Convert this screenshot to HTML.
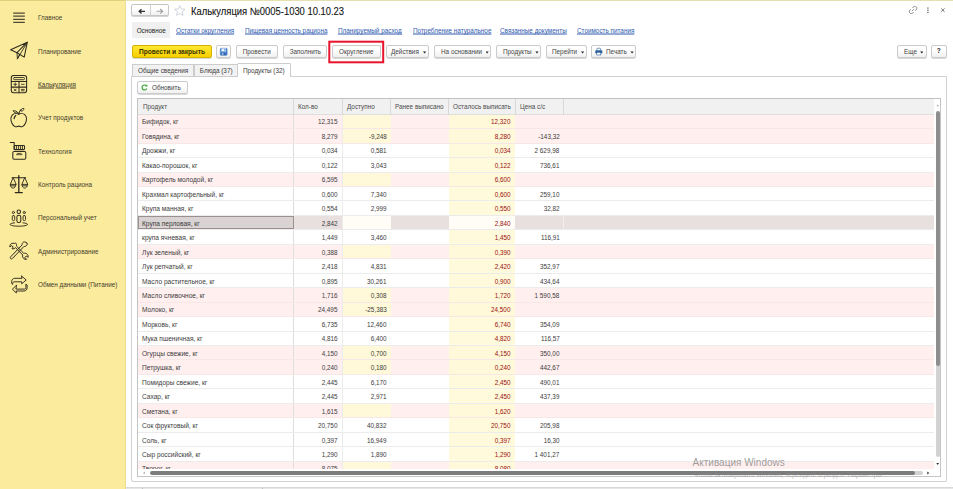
<!DOCTYPE html>
<html lang="ru"><head><meta charset="utf-8"><title>Калькуляция</title>
<style>
*{box-sizing:border-box;margin:0;padding:0}
html,body{width:953px;height:489px;overflow:hidden;background:#fff}
body{font-family:"Liberation Sans",sans-serif;font-size:7px;color:#3c3c3c;line-height:1}
#app{position:relative;width:953px;height:489px;overflow:hidden;background:#fff}
/* sidebar */
#side{position:absolute;left:0;top:0;width:125.6px;height:489px;background:#fbeb9c;border-right:1px solid #eadc92}
#side .edge{display:none}
#topstrip{position:absolute;left:0;top:0;width:953px;height:1.2px;background:#e6dfb0}
#topstrip i{position:absolute;left:0;top:0;width:125px;height:100%;background:#e0cf7a;display:block}
.mi{position:absolute;left:37.8px;white-space:nowrap;color:#45412f;transform:translateY(-50%) scaleX(.907);transform-origin:0 50%}
.mi.u{text-decoration:underline}
.ico{position:absolute;overflow:visible}
.ico *{fill:none;stroke:#2e2a1f;stroke-width:1.05;stroke-linecap:round;stroke-linejoin:round}
/* top */
.title{position:absolute;left:190.8px;top:11.1px;font-size:10.5px;color:#111;white-space:nowrap;-webkit-text-stroke:0.1px #111;transform:translateY(-50%) scaleX(.896);transform-origin:0 50%}
.navgrp{position:absolute;left:131.3px;top:4.4px;width:37.3px;height:12px;border:1px solid #c6c6c6;border-radius:2px;background:linear-gradient(#fff 40%,#f0f0f0);box-shadow:0 0.7px 0.6px rgba(0,0,0,.22)}
.navgrp i{position:absolute;left:17.8px;top:0;width:1px;height:100%;background:#d0d0d0}
.svgi{position:absolute;overflow:visible}
.lnk{position:absolute;top:30.3px;transform:translateY(-50%) scaleX(.907);transform-origin:0 50%;color:#2f5bb0;text-decoration:underline;white-space:nowrap}
.maintab{position:absolute;left:132px;top:22px;width:38.4px;height:15.8px;background:#f0f0f0}
.maintab span{position:absolute;left:0;width:100%;text-align:center;top:8.3px;transform:translateY(-50%) scaleX(.907);color:#222}
.btn{position:absolute;top:45.3px;height:12.9px;border:1px solid #cbcbcb;border-radius:2px;background:linear-gradient(#ffffff 35%,#f0f0f0);box-shadow:0 0.7px 0.6px rgba(0,0,0,.2);white-space:nowrap;color:#444}
.btn span{position:absolute;left:0;width:100%;text-align:center;top:calc(50% - 0.4px);transform:translateY(-50%) scaleX(.907)}
.btn span.l{text-align:left;width:auto;transform-origin:0 50%}
.btn.y{background:linear-gradient(#ffe733,#f6d000);border-color:#d4b400;color:#3a3300;font-weight:bold}
.btn.y span{transform:translateY(-50%) scaleX(.94)}
.dd{position:absolute;top:5.2px;width:3.2px;height:2.1px;background:#222;clip-path:polygon(0 0,100% 0,50% 100%)}
.redbox{position:absolute;left:0;top:0;overflow:visible}
.tab{position:absolute;top:64px;height:13px;border:1px solid #cdcdcd;background:#f2f2f2;color:#3c3c3c}
.tab span{position:absolute;left:0;width:100%;text-align:center;top:calc(50% - 0.3px);transform:translateY(-50%) scaleX(.907);white-space:nowrap}
.tab.act{top:63px;height:14px;background:#fff;border-bottom:none;z-index:2;border-radius:1.5px 1.5px 0 0}
.panel{position:absolute;left:131.3px;top:76px;width:815.8px;height:406px;border:1px solid #d0d0d0;border-radius:0 0 2px 2px}
/* grid */
.grid{position:absolute;left:137.2px;top:98.2px;width:804.2px;height:378.6px;border:1px solid #c4c4c4;border-top:1.3px solid #c0c0c0;background:#fff;overflow:hidden}
.ghead{position:absolute;left:0;top:0;width:796.2px;height:15.5px;background:#f1f1f1;border-bottom:1px solid #dedede}
.hc{position:absolute;top:0;height:15.5px;border-right:1px solid #d8d8d8;color:#4a4a4a}
.hc.last{border-right:none}
.hc span{position:absolute;left:4.4px;top:6.6px;transform:translateY(-50%) scaleX(.907);transform-origin:0 50%;white-space:nowrap}
.gbody{position:absolute;left:0;top:15.5px;width:796.2px;height:354.5px;overflow:hidden}
.row{position:absolute;left:0;width:796.2px;height:14.46px;border-bottom:1px solid #ececec;background:#fff}
.row.pink{background:#ffefef;border-bottom-color:#f8e7e7}
.row.sel{background:#e8dfdf}
.c{position:absolute;top:0;height:100%}
.c span{position:absolute;top:6.8px;transform:translateY(-50%) scaleX(.907);transform-origin:100% 50%;white-space:nowrap}
.c0{border-right:1px solid #dedede}
.c1{border-right:1px solid #ececec}
.c0 span{left:3.7px;transform-origin:0 50%;transform:translateY(-50%) scaleX(.94)}
.c1 span{right:4.9px}.c2 span{right:4.6px}.c3 span{right:4px}.c4 span{right:4.3px}.c5 span{right:4.3px}
.c4{background:#fffadb}
.row.pink .c2,.row.pink .c4{background:#fff9d9}
.c4 span{color:#9a0e0e}
.row.sel .c0{background:#d9d3d3;border:1px solid #9a9090}
.row.sel .c0 span{left:2.7px;top:5.8px}
.row.sel .c2,.row.sel .c4{background:#fffdf6}
.row.sel .c5{border-right:1px solid #f3eded}
/* scrollbars */
.vsb{position:absolute;left:796.2px;top:0;width:7px;height:377px;background:#fff}
.vsb .th{position:absolute;left:1.8px;top:11.6px;width:3.7px;height:255.5px;border-radius:2px;background:#8e8e8e}
.vsb .tr{position:absolute;left:1.8px;top:265px;width:3.7px;height:92.5px;border-radius:0 0 2px 2px;background:#d2d2d2}
.hsb{position:absolute;left:0;top:370.4px;width:797px;height:7px;background:#fff}
.hsb .th{position:absolute;left:11.5px;top:1.4px;width:765px;height:3.9px;border-radius:2px;background:#7c7c7c}
.hsb .tr{position:absolute;left:770px;top:1.4px;width:14.5px;height:3.9px;border-radius:2px;background:#d2d2d2}
.arr{position:absolute;width:0;height:0}
.wm1{position:absolute;left:692.6px;top:463.2px;transform:translateY(-50%);font-size:10px;color:rgba(120,120,120,.72);white-space:nowrap;z-index:5}
.wm2{position:absolute;left:694px;top:474.4px;transform:translateY(-50%) scaleX(.907);transform-origin:0 50%;font-size:7px;color:rgba(140,140,140,.6);white-space:nowrap;z-index:5}
.bot{position:absolute;left:126px;top:486.8px;width:827px;height:3px;background:#e6e6e6;border-top:1px solid #d8d8d8}
.bot i{position:absolute;top:0;width:1px;height:3px;background:#bdbdbd}

</style></head>
<body>
<div id="app">
<div id="side"><div class="edge"></div>
<div class="mi" style="top:17.4px">Главное</div>
<div class="mi" style="top:50.7px">Планирование</div>
<div class="mi u" style="top:83.9px">Калькуляция</div>
<div class="mi" style="top:117.4px">Учет продуктов</div>
<div class="mi" style="top:150.7px">Технология</div>
<div class="mi" style="top:184.1px">Контроль рациона</div>
<div class="mi" style="top:217.4px">Персональный учет</div>
<div class="mi" style="top:250.7px">Администрирование</div>
<div class="mi" style="top:284.1px">Обмен данными (Питание)</div>
<!-- icons -->
<svg class="ico" style="left:0;top:0" width="126" height="300" viewBox="0 0 126 300">
<!-- menu -->
<path d="M13.2 13.100H24.800M13.2 16.200H24.800M13.2 19.300H24.800M13.2 22.350H24.800" style="stroke:#4f4938;stroke-width:1.25;stroke-linecap:butt"/>
<!-- paper plane -->
<path d="M27.300 42.200L10.600 49.800L17 52.700L27.300 42.200L24.200 57.100L17 52.700"/>
<path d="M17 52.700L17.400 58.900L19.600 54.300M27.300 42.200L17.400 58.900" style="stroke-width:.9"/>
<!-- calculator -->
<rect x="11.300" y="75.500" width="15.300" height="17.300" rx="2.200"/>
<rect x="13.600" y="77.500" width="10.800" height="2.200" rx=".8" style="stroke-width:.9"/>
<path d="M11.300 81.500H26.600M11.300 87.100H26.600M19 81.500V92.800"/>
<path d="M13.800 84.300H16.600M15.200 82.900V85.700M21.400 84.300H24.200M14.200 89L16.200 91M16.200 89L14.200 91M21.400 89.400H24.200M21.400 90.800H24.200" style="stroke-width:.85"/>
<!-- apple -->
<path d="M18.700 114.400c-1.600-1.300-4.300-1.300-6 .3c-2.200 2.100-2.100 5.800-.6 8.800c1.400 2.800 3.600 3.900 5.200 3c.9-.5 1.900-.5 2.800 0c1.600.9 3.800-.2 5.200-3c1.500-3 1.600-6.700-.6-8.800c-1.700-1.600-4.400-1.600-6-.3z"/>
<path d="M18.800 114.200c.2-1.800.9-3.300 2.200-4.500"/>
<path d="M21 110c.4-1.200 1.600-1.900 2.900-1.500c.1 1.300-.9 2.600-2.400 2.600zM18.300 113.100c-1.300-1.900-3.300-2.700-5.300-2.300c1 1.600 2.900 2.500 5.300 2.300z" style="stroke-width:.9"/>
<path d="M14.100 118.600c.1-1.300.7-2.400 1.700-3.100" style="stroke-width:1.200"/>
<!-- fryer -->
<path d="M10.200 142.400H14.200V149.600"/>
<rect x="14.200" y="145.500" width="10.300" height="4.100" rx=".8"/>
<path d="M16.400 145.500V149.600M18.400 145.500V149.600M20.400 145.500V149.600M22.400 145.500V149.600" style="stroke-width:.9"/>
<rect x="12.800" y="151.400" width="13" height="7.900" rx="1.300"/>
<path d="M16.600 154.300c.3-.7.700-.9 1.300-.9h2.700c.6 0 1 .2 1.300.9z" style="stroke-width:.8"/>
<!-- scales -->
<path d="M18.800 175.600V192.600M15.300 192.600H22.300" style="stroke-width:1.300"/>
<path d="M12 177.700H25.600"/>
<path d="M13 177.900L10.300 184.400H15.800zM24.600 177.900L21.900 184.400H27.400z" style="stroke-width:.9"/>
<path d="M10.300 184.400c0 2.200 1.200 3.700 2.750 3.700s2.750-1.500 2.750-3.700M21.900 184.400c0 2.200 1.200 3.700 2.750 3.700s2.750-1.500 2.750-3.700M10.800 185.800H15.300M22.400 185.800H26.900" style="stroke-width:.9"/>
<!-- people -->
<circle cx="18.800" cy="211.800" r="1.750"/>
<rect x="16.900" y="215.200" width="3.900" height="7.200" rx="1.700"/>
<circle cx="13.400" cy="212.500" r="1.100" style="stroke-width:.9"/>
<rect x="12.300" y="215.600" width="2.400" height="5" rx="1" style="stroke-width:.9"/>
<circle cx="24.300" cy="212.500" r="1.100" style="stroke-width:.9"/>
<rect x="23.100" y="215.600" width="2.400" height="5" rx="1" style="stroke-width:.9"/>
<path d="M14.600 222.800c-2.700.3-4.500.9-4.500 1.600c0 1 3.900 1.800 8.700 1.800s8.700-.8 8.700-1.800c0-.7-1.800-1.300-4.500-1.600" style="stroke-width:.95"/>
<!-- tools -->
<path d="M13.900 243.300c-1.300-.3-2.600.1-3.400 1.100c-.6.800-.8 1.700-.6 2.600l1.800-1.500l1.500 1.500l-1.200 1.700c1.300.4 2.700 0 3.500-1.100l7.200 7.400c-.4 1.300 0 2.700 1 3.600c.8.700 1.900.9 2.900.7l-1.700-1.700l1.400-1.600l1.800 1.300c.3-1.200-.1-2.500-1.100-3.400c-.9-.7-2.100-.9-3.200-.5l-7.300-7.300c.3-1 0-2.100-.6-2.800z" style="stroke-width:1"/>
<path d="M26.900 243.100c.6.500.5 1.600-.3 2.400c-.7.800-1.700 1.100-2.500.8L12.300 258.600c-.5.500-1.300.5-1.700 0c-.5-.4-.5-1.200 0-1.700l11.600-12.100c-.3-.7 0-1.500.7-2.200c.9-.9 2.300-1.200 4 .5z" style="stroke-width:1"/>
<!-- exchange -->
<path d="M21.700 276.100L26.200 280L21.700 283.800V281.800H14.300c-.9 0-1.600.7-1.600 1.600v1l-1-.9v-2.100c0-1.700 1.400-3.100 3.100-3.100h6.900z" style="stroke-width:.95"/>
<path d="M16.300 285.400L12.400 289.200L16.300 293V291h7.700c1.700 0 3.100-1.400 3.100-3.100V285l-1.200-.8v3.300c0 .9-.7 1.600-1.600 1.600H16.300z" style="stroke-width:.95"/>
</svg>
</div>
<div id="topstrip"><i></i></div>
<div class="navgrp"><i></i>
<svg class="svgi" style="left:5.6px;top:2.2px" width="8" height="7" viewBox="0 0 8 7"><path d="M7 3.3H1.400M3.500 1.200L1.200 3.300L3.500 5.400" fill="none" stroke="#333" stroke-width="1.350"/></svg>
<svg class="svgi" style="left:23.3px;top:2.2px" width="8" height="7" viewBox="0 0 8 7"><path d="M0.6 3.3H6.4M4.2 1L6.6 3.3L4.2 5.6" fill="none" stroke="#a0a0a0" stroke-width="1.1"/></svg>
</div>
<svg class="svgi" style="left:173.8px;top:5.3px" width="11.6" height="10.8" viewBox="0 0 24 22.6"><path d="M12 1.2l3.2 7 7.6.8-5.7 5.1 1.6 7.5L12 17.800 5.300 21.600l1.600-7.500L1.200 9l7.600-.8z" fill="#fff" stroke="#c3cad6" stroke-width="1.7" stroke-linejoin="round"/></svg>
<div class="title">Калькуляция №0005-1030 10.10.23</div>
<div class="maintab"><span>Основное</span></div>
<div class="lnk" style="left:176px">Остатки округления</div>
<div class="lnk" style="left:245px">Пищевая ценность рациона</div>
<div class="lnk" style="left:337.5px">Планируемый расход</div>
<div class="lnk" style="left:413.2px">Потребление натуральное</div>
<div class="lnk" style="left:499.7px">Связанные документы</div>
<div class="lnk" style="left:577px">Стоимость питания</div>
<!-- top-right icons -->
<svg class="svgi" style="left:0;top:0" width="953" height="20" viewBox="0 0 953 20">
<g fill="none" stroke="#8c8c8c" stroke-width="0.95" stroke-linecap="round"><path d="M910.470 9.510A2.200 2.200 0 1 0 913.390 12.430"/><path d="M915.630 10.490A2.200 2.200 0 1 0 912.710 7.570"/><path d="M912.200 10.800L913.900 9.200" stroke-dasharray="0.700 0.900"/></g>
<g fill="#4e4e4e"><rect x="927.300" y="7.500" width="1.200" height="1.200"/><rect x="927.300" y="9.700" width="1.200" height="1.200"/><rect x="927.300" y="11.900" width="1.200" height="1.200"/></g>
<path d="M941.200 8.500L944.600 11.900M944.600 8.500L941.200 11.900" stroke="#606060" stroke-width="0.850" fill="none"/>
</svg>
<!-- command bar -->
<div class="btn y" style="left:132px;width:80px"><span>Провести и закрыть</span></div>
<div class="btn" style="left:216.4px;width:14.2px">
<svg class="svgi" style="left:2.7px;top:1.7px" width="7.4" height="7.6" viewBox="0 0 15 15.400"><rect x="0.5" y="0.5" width="14" height="14.400" rx="1.5" fill="#4a88d4" stroke="#3a6fb8"/><rect x="3" y="0.8" width="9" height="6.2" fill="#e8f1fb"/><rect x="8.800" y="1.600" width="2" height="4" fill="#4a88d4"/><rect x="2.600" y="9.600" width="9.800" height="4.800" fill="#3568ae"/><rect x="4" y="10.800" width="3" height="2.600" fill="#dfe9f6"/></svg>
</div>
<div class="btn" style="left:236px;width:41.5px"><span>Провести</span></div>
<div class="btn" style="left:282.5px;width:44.7px"><span>Заполнить</span></div>
<div class="btn" style="left:332px;width:48.6px"><span>Округление</span></div>
<div class="btn" style="left:386px;width:42.9px"><span class="l" style="left:4.400px">Действия</span><i class="dd" style="left:36px"></i></div>
<div class="btn" style="left:434px;width:57.4px"><span class="l" style="left:5.600px">На основании</span><i class="dd" style="left:50.500px"></i></div>
<div class="btn" style="left:496.4px;width:44.9px"><span class="l" style="left:5.200px">Продукты</span><i class="dd" style="left:38px"></i></div>
<div class="btn" style="left:546px;width:40.9px"><span class="l" style="left:5.400px">Перейти</span><i class="dd" style="left:34px"></i></div>
<div class="btn" style="left:591.3px;width:45.2px">
<svg class="svgi" style="left:3.2px;top:1.9px" width="7.6" height="7.4" viewBox="0 0 15.200 14.800"><path d="M4 4.500V1.200c0-.4.300-.7.700-.7h5.800c.4 0 .7.300.7.700v3.300" fill="#fff" stroke="#2a5d9a" stroke-width="1.3"/><rect x="0.600" y="4.500" width="14" height="6.400" rx="1.600" fill="#2a5d9a"/><rect x="3.600" y="8.600" width="8" height="5.400" fill="#fff" stroke="#2a5d9a" stroke-width="1.2"/></svg>
<span class="l" style="left:14px">Печать</span><i class="dd" style="left:38.200px"></i></div>
<div class="btn" style="left:896.6px;width:30.2px"><span class="l" style="left:6.500px">Еще</span><i class="dd" style="left:22.600px"></i></div>
<div class="btn" style="left:931.3px;width:15.4px"><span style="font-weight:bold;font-size:7.2px;color:#222">?</span></div>
<svg class="redbox" width="953" height="70" viewBox="0 0 953 70"><rect x="329.300" y="41.700" width="53.900" height="20.600" fill="none" stroke="#e8132c" stroke-width="2"/></svg>
<div class="panel"></div>
<div class="tab" style="left:132px;width:62.3px"><span>Общие сведения</span></div>
<div class="tab" style="left:193.6px;width:44.4px"><span>Блюда (37)</span></div>
<div class="tab act" style="left:237.3px;width:53.6px"><span>Продукты (32)</span></div>
<div class="btn" style="left:137px;top:81.4px;width:51px;height:13px">
<svg class="svgi" style="left:2.900px;top:1.800px" width="7" height="7" viewBox="0 0 14 14"><path d="M11.6 9.200A5 5 0 1 1 11.200 4" fill="none" stroke="#35a831" stroke-width="2.300"/><path d="M8.200 4.800L12.800 5.200L12.600 0.600z" fill="#35a831"/></svg>
<span class="l" style="left:14.200px">Обновить</span></div>
<div class="grid">
<div class="ghead"></div>
<div class="hc" style="left:0.0px;width:155.8px"><span>Продукт</span></div>
<div class="hc" style="left:155.8px;width:49.0px"><span>Кол-во</span></div>
<div class="hc" style="left:204.8px;width:48.0px"><span>Доступно</span></div>
<div class="hc" style="left:252.8px;width:58.0px"><span>Ранее выписано</span></div>
<div class="hc" style="left:310.8px;width:67.0px"><span>Осталось выписать</span></div>
<div class="hc" style="left:377.8px;width:48.0px"><span>Цена с/с</span></div>
<div class="hc last" style="left:425.8px;width:370.4px"></div>
<div class="gbody">
<div class="row pink" style="top:0.00px"><div class="c c0" style="left:0.0px;width:155.8px"><span>Бифидок, кг</span></div><div class="c c1" style="left:155.8px;width:49.0px"><span>12,315</span></div><div class="c c2" style="left:204.8px;width:48.0px"><span></span></div><div class="c c3" style="left:252.8px;width:58.0px"><span></span></div><div class="c c4" style="left:310.8px;width:66.2px"><span>12,320</span></div><div class="c c5" style="left:377.0px;width:48.8px"><span></span></div></div>
<div class="row pink" style="top:14.46px"><div class="c c0" style="left:0.0px;width:155.8px"><span>Говядина, кг</span></div><div class="c c1" style="left:155.8px;width:49.0px"><span>8,279</span></div><div class="c c2" style="left:204.8px;width:48.0px"><span>-9,248</span></div><div class="c c3" style="left:252.8px;width:58.0px"><span></span></div><div class="c c4" style="left:310.8px;width:66.2px"><span>8,280</span></div><div class="c c5" style="left:377.0px;width:48.8px"><span>-143,32</span></div></div>
<div class="row" style="top:28.92px"><div class="c c0" style="left:0.0px;width:155.8px"><span>Дрожжи, кг</span></div><div class="c c1" style="left:155.8px;width:49.0px"><span>0,034</span></div><div class="c c2" style="left:204.8px;width:48.0px"><span>0,581</span></div><div class="c c3" style="left:252.8px;width:58.0px"><span></span></div><div class="c c4" style="left:310.8px;width:66.2px"><span>0,034</span></div><div class="c c5" style="left:377.0px;width:48.8px"><span>2 629,98</span></div></div>
<div class="row" style="top:43.37px"><div class="c c0" style="left:0.0px;width:155.8px"><span>Какао-порошок, кг</span></div><div class="c c1" style="left:155.8px;width:49.0px"><span>0,122</span></div><div class="c c2" style="left:204.8px;width:48.0px"><span>3,043</span></div><div class="c c3" style="left:252.8px;width:58.0px"><span></span></div><div class="c c4" style="left:310.8px;width:66.2px"><span>0,122</span></div><div class="c c5" style="left:377.0px;width:48.8px"><span>736,61</span></div></div>
<div class="row pink" style="top:57.83px"><div class="c c0" style="left:0.0px;width:155.8px"><span>Картофель молодой, кг</span></div><div class="c c1" style="left:155.8px;width:49.0px"><span>6,595</span></div><div class="c c2" style="left:204.8px;width:48.0px"><span></span></div><div class="c c3" style="left:252.8px;width:58.0px"><span></span></div><div class="c c4" style="left:310.8px;width:66.2px"><span>6,600</span></div><div class="c c5" style="left:377.0px;width:48.8px"><span></span></div></div>
<div class="row" style="top:72.29px"><div class="c c0" style="left:0.0px;width:155.8px"><span>Крахмал картофельный, кг</span></div><div class="c c1" style="left:155.8px;width:49.0px"><span>0,600</span></div><div class="c c2" style="left:204.8px;width:48.0px"><span>7,340</span></div><div class="c c3" style="left:252.8px;width:58.0px"><span></span></div><div class="c c4" style="left:310.8px;width:66.2px"><span>0,600</span></div><div class="c c5" style="left:377.0px;width:48.8px"><span>259,10</span></div></div>
<div class="row" style="top:86.75px"><div class="c c0" style="left:0.0px;width:155.8px"><span>Крупа манная, кг</span></div><div class="c c1" style="left:155.8px;width:49.0px"><span>0,554</span></div><div class="c c2" style="left:204.8px;width:48.0px"><span>2,999</span></div><div class="c c3" style="left:252.8px;width:58.0px"><span></span></div><div class="c c4" style="left:310.8px;width:66.2px"><span>0,550</span></div><div class="c c5" style="left:377.0px;width:48.8px"><span>32,82</span></div></div>
<div class="row sel" style="top:101.21px"><div class="c c0" style="left:0.0px;width:155.8px"><span>Крупа перловая, кг</span></div><div class="c c1" style="left:155.8px;width:49.0px"><span>2,842</span></div><div class="c c2" style="left:204.8px;width:48.0px"><span></span></div><div class="c c3" style="left:252.8px;width:58.0px"><span></span></div><div class="c c4" style="left:310.8px;width:66.2px"><span>2,840</span></div><div class="c c5" style="left:377.0px;width:48.8px"><span></span></div></div>
<div class="row" style="top:115.66px"><div class="c c0" style="left:0.0px;width:155.8px"><span>крупа ячневая, кг</span></div><div class="c c1" style="left:155.8px;width:49.0px"><span>1,449</span></div><div class="c c2" style="left:204.8px;width:48.0px"><span>3,460</span></div><div class="c c3" style="left:252.8px;width:58.0px"><span></span></div><div class="c c4" style="left:310.8px;width:66.2px"><span>1,450</span></div><div class="c c5" style="left:377.0px;width:48.8px"><span>116,91</span></div></div>
<div class="row pink" style="top:130.12px"><div class="c c0" style="left:0.0px;width:155.8px"><span>Лук зеленый, кг</span></div><div class="c c1" style="left:155.8px;width:49.0px"><span>0,388</span></div><div class="c c2" style="left:204.8px;width:48.0px"><span></span></div><div class="c c3" style="left:252.8px;width:58.0px"><span></span></div><div class="c c4" style="left:310.8px;width:66.2px"><span>0,390</span></div><div class="c c5" style="left:377.0px;width:48.8px"><span></span></div></div>
<div class="row" style="top:144.58px"><div class="c c0" style="left:0.0px;width:155.8px"><span>Лук репчатый, кг</span></div><div class="c c1" style="left:155.8px;width:49.0px"><span>2,418</span></div><div class="c c2" style="left:204.8px;width:48.0px"><span>4,831</span></div><div class="c c3" style="left:252.8px;width:58.0px"><span></span></div><div class="c c4" style="left:310.8px;width:66.2px"><span>2,420</span></div><div class="c c5" style="left:377.0px;width:48.8px"><span>352,97</span></div></div>
<div class="row" style="top:159.04px"><div class="c c0" style="left:0.0px;width:155.8px"><span>Масло растительное, кг</span></div><div class="c c1" style="left:155.8px;width:49.0px"><span>0,895</span></div><div class="c c2" style="left:204.8px;width:48.0px"><span>30,261</span></div><div class="c c3" style="left:252.8px;width:58.0px"><span></span></div><div class="c c4" style="left:310.8px;width:66.2px"><span>0,900</span></div><div class="c c5" style="left:377.0px;width:48.8px"><span>434,64</span></div></div>
<div class="row pink" style="top:173.50px"><div class="c c0" style="left:0.0px;width:155.8px"><span>Масло сливочное, кг</span></div><div class="c c1" style="left:155.8px;width:49.0px"><span>1,716</span></div><div class="c c2" style="left:204.8px;width:48.0px"><span>0,308</span></div><div class="c c3" style="left:252.8px;width:58.0px"><span></span></div><div class="c c4" style="left:310.8px;width:66.2px"><span>1,720</span></div><div class="c c5" style="left:377.0px;width:48.8px"><span>1 590,58</span></div></div>
<div class="row pink" style="top:187.95px"><div class="c c0" style="left:0.0px;width:155.8px"><span>Молоко, кг</span></div><div class="c c1" style="left:155.8px;width:49.0px"><span>24,495</span></div><div class="c c2" style="left:204.8px;width:48.0px"><span>-25,383</span></div><div class="c c3" style="left:252.8px;width:58.0px"><span></span></div><div class="c c4" style="left:310.8px;width:66.2px"><span>24,500</span></div><div class="c c5" style="left:377.0px;width:48.8px"><span></span></div></div>
<div class="row" style="top:202.41px"><div class="c c0" style="left:0.0px;width:155.8px"><span>Морковь, кг</span></div><div class="c c1" style="left:155.8px;width:49.0px"><span>6,735</span></div><div class="c c2" style="left:204.8px;width:48.0px"><span>12,460</span></div><div class="c c3" style="left:252.8px;width:58.0px"><span></span></div><div class="c c4" style="left:310.8px;width:66.2px"><span>6,740</span></div><div class="c c5" style="left:377.0px;width:48.8px"><span>354,09</span></div></div>
<div class="row" style="top:216.87px"><div class="c c0" style="left:0.0px;width:155.8px"><span>Мука пшеничная, кг</span></div><div class="c c1" style="left:155.8px;width:49.0px"><span>4,816</span></div><div class="c c2" style="left:204.8px;width:48.0px"><span>6,400</span></div><div class="c c3" style="left:252.8px;width:58.0px"><span></span></div><div class="c c4" style="left:310.8px;width:66.2px"><span>4,820</span></div><div class="c c5" style="left:377.0px;width:48.8px"><span>116,57</span></div></div>
<div class="row pink" style="top:231.33px"><div class="c c0" style="left:0.0px;width:155.8px"><span>Огурцы свежие, кг</span></div><div class="c c1" style="left:155.8px;width:49.0px"><span>4,150</span></div><div class="c c2" style="left:204.8px;width:48.0px"><span>0,700</span></div><div class="c c3" style="left:252.8px;width:58.0px"><span></span></div><div class="c c4" style="left:310.8px;width:66.2px"><span>4,150</span></div><div class="c c5" style="left:377.0px;width:48.8px"><span>350,00</span></div></div>
<div class="row pink" style="top:245.79px"><div class="c c0" style="left:0.0px;width:155.8px"><span>Петрушка, кг</span></div><div class="c c1" style="left:155.8px;width:49.0px"><span>0,240</span></div><div class="c c2" style="left:204.8px;width:48.0px"><span>0,180</span></div><div class="c c3" style="left:252.8px;width:58.0px"><span></span></div><div class="c c4" style="left:310.8px;width:66.2px"><span>0,240</span></div><div class="c c5" style="left:377.0px;width:48.8px"><span>442,67</span></div></div>
<div class="row" style="top:260.24px"><div class="c c0" style="left:0.0px;width:155.8px"><span>Помидоры свежие, кг</span></div><div class="c c1" style="left:155.8px;width:49.0px"><span>2,445</span></div><div class="c c2" style="left:204.8px;width:48.0px"><span>6,170</span></div><div class="c c3" style="left:252.8px;width:58.0px"><span></span></div><div class="c c4" style="left:310.8px;width:66.2px"><span>2,450</span></div><div class="c c5" style="left:377.0px;width:48.8px"><span>490,01</span></div></div>
<div class="row" style="top:274.70px"><div class="c c0" style="left:0.0px;width:155.8px"><span>Сахар, кг</span></div><div class="c c1" style="left:155.8px;width:49.0px"><span>2,445</span></div><div class="c c2" style="left:204.8px;width:48.0px"><span>2,971</span></div><div class="c c3" style="left:252.8px;width:58.0px"><span></span></div><div class="c c4" style="left:310.8px;width:66.2px"><span>2,450</span></div><div class="c c5" style="left:377.0px;width:48.8px"><span>437,39</span></div></div>
<div class="row pink" style="top:289.16px"><div class="c c0" style="left:0.0px;width:155.8px"><span>Сметана, кг</span></div><div class="c c1" style="left:155.8px;width:49.0px"><span>1,615</span></div><div class="c c2" style="left:204.8px;width:48.0px"><span></span></div><div class="c c3" style="left:252.8px;width:58.0px"><span></span></div><div class="c c4" style="left:310.8px;width:66.2px"><span>1,620</span></div><div class="c c5" style="left:377.0px;width:48.8px"><span></span></div></div>
<div class="row" style="top:303.62px"><div class="c c0" style="left:0.0px;width:155.8px"><span>Сок фруктовый, кг</span></div><div class="c c1" style="left:155.8px;width:49.0px"><span>20,750</span></div><div class="c c2" style="left:204.8px;width:48.0px"><span>40,832</span></div><div class="c c3" style="left:252.8px;width:58.0px"><span></span></div><div class="c c4" style="left:310.8px;width:66.2px"><span>20,750</span></div><div class="c c5" style="left:377.0px;width:48.8px"><span>205,98</span></div></div>
<div class="row" style="top:318.08px"><div class="c c0" style="left:0.0px;width:155.8px"><span>Соль, кг</span></div><div class="c c1" style="left:155.8px;width:49.0px"><span>0,397</span></div><div class="c c2" style="left:204.8px;width:48.0px"><span>16,949</span></div><div class="c c3" style="left:252.8px;width:58.0px"><span></span></div><div class="c c4" style="left:310.8px;width:66.2px"><span>0,397</span></div><div class="c c5" style="left:377.0px;width:48.8px"><span>16,30</span></div></div>
<div class="row" style="top:332.53px"><div class="c c0" style="left:0.0px;width:155.8px"><span>Сыр российский, кг</span></div><div class="c c1" style="left:155.8px;width:49.0px"><span>1,290</span></div><div class="c c2" style="left:204.8px;width:48.0px"><span>1,890</span></div><div class="c c3" style="left:252.8px;width:58.0px"><span></span></div><div class="c c4" style="left:310.8px;width:66.2px"><span>1,290</span></div><div class="c c5" style="left:377.0px;width:48.8px"><span>1 401,27</span></div></div>
<div class="row pink" style="top:346.99px"><div class="c c0" style="left:0.0px;width:155.8px"><span>Творог, кг</span></div><div class="c c1" style="left:155.8px;width:49.0px"><span>8,075</span></div><div class="c c2" style="left:204.8px;width:48.0px"><span></span></div><div class="c c3" style="left:252.8px;width:58.0px"><span></span></div><div class="c c4" style="left:310.8px;width:66.2px"><span>8,080</span></div><div class="c c5" style="left:377.0px;width:48.8px"><span></span></div></div>
</div>
<div class="hsb"><div class="tr"></div><div class="th"></div></div>
<div class="vsb"><div class="tr"></div><div class="th"></div></div>
<svg class="svgi" style="left:0;top:0" width="804" height="378" viewBox="0 0 804 378">
<path d="M5 374L6.800 372.700V375.300z" fill="#a8a8a8"/>
<path d="M791.200 374L789.300 372.600V375.400z" fill="#2a2a2a"/>
<path d="M799.700 5.500L801 7.200H798.400z" fill="#a8a8a8"/>
<path d="M799.700 365.900L801.100 364.100H798.300z" fill="#2a2a2a"/>
</svg>
</div>
<div class="wm1">Активация Windows</div>
<div class="wm2">Чтобы активировать Windows, перейдите в раздел "Параметры".</div>
<div class="bot"><i style="left:15.500px"></i><i style="left:136px"></i></div>
</div>
</body></html>
